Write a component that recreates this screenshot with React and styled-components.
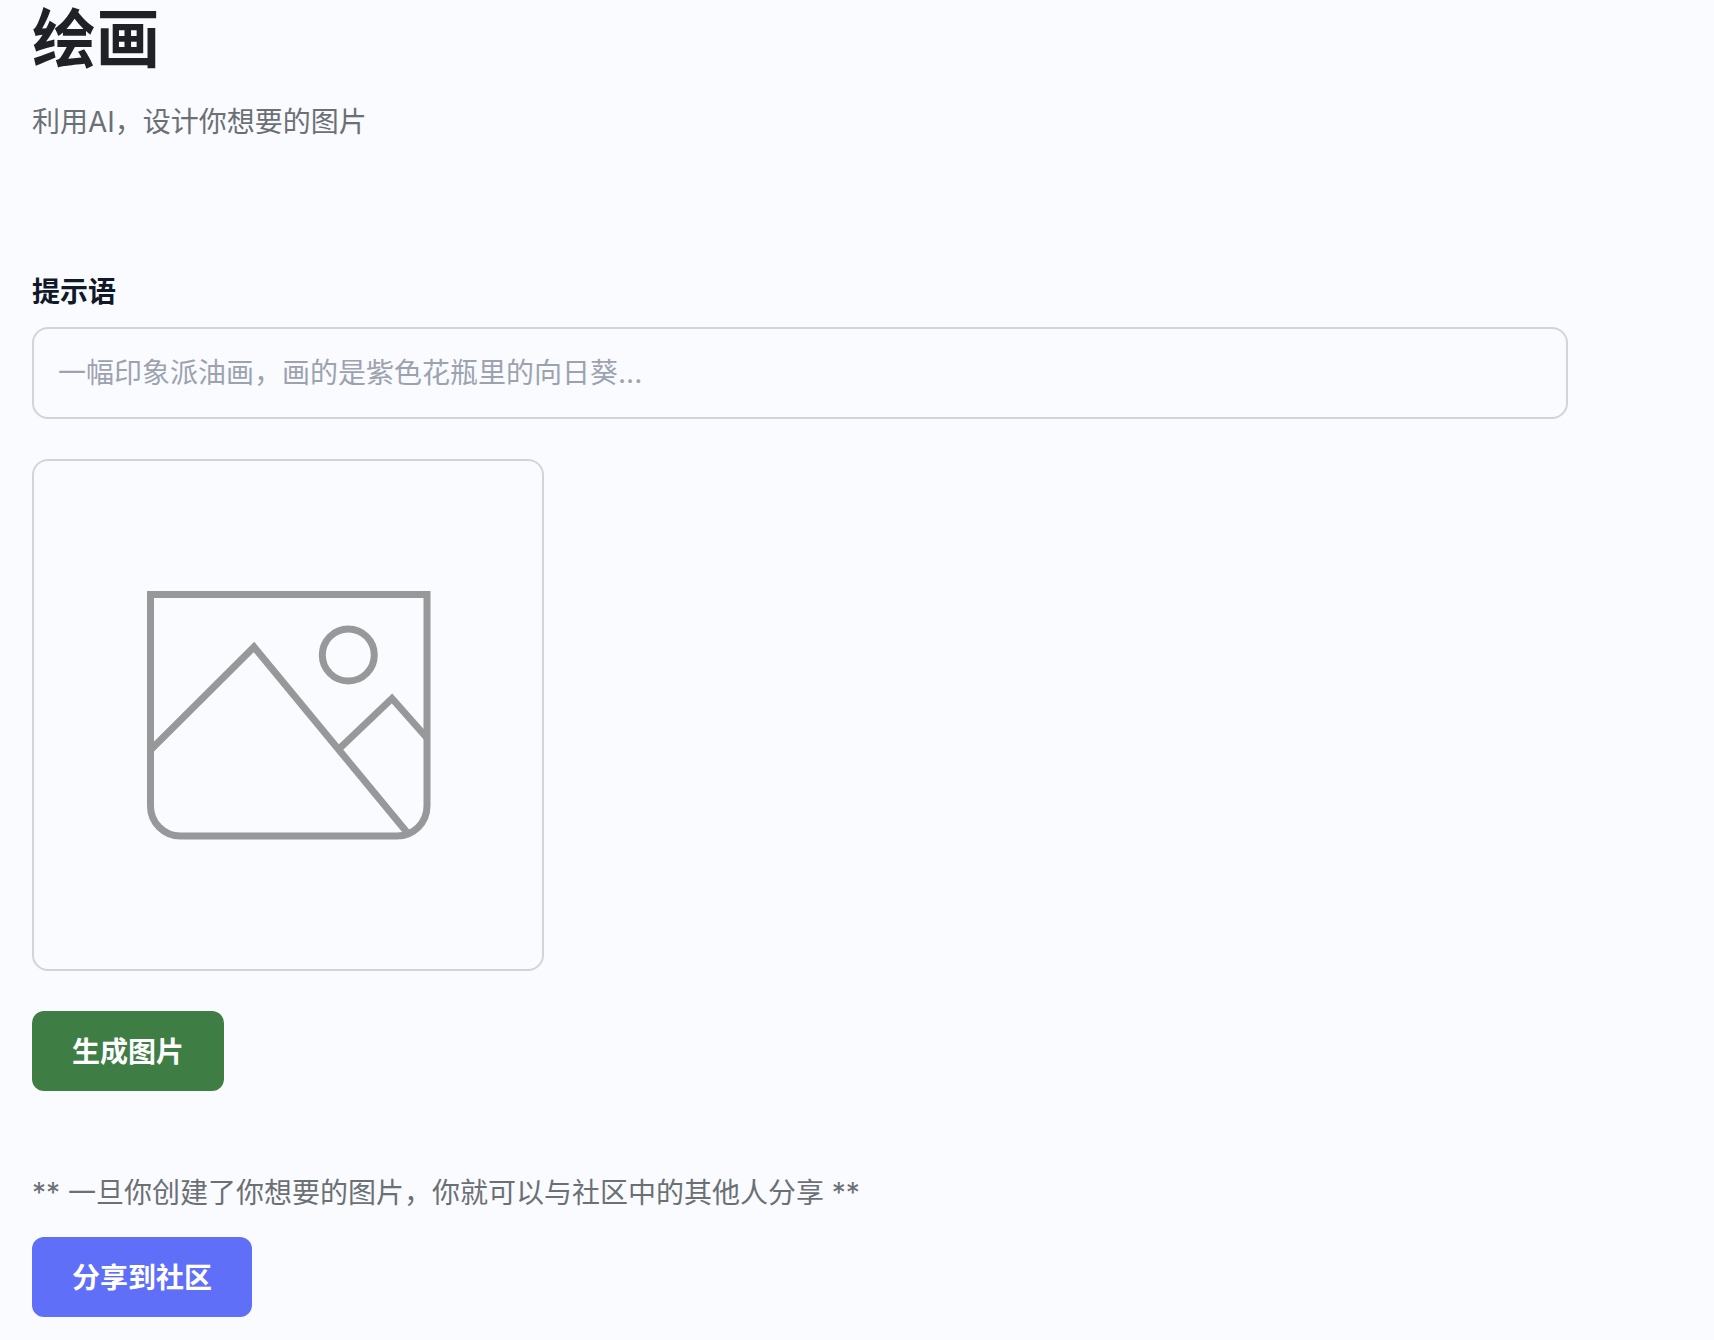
import React from "react";
import styled, { createGlobalStyle } from "styled-components";

const GlobalStyle = createGlobalStyle`
  html, body {
    margin: 0;
    padding: 0;
    background: #fafbff;
  }
  body {
    font-family: Inter, "Noto Sans CJK SC", sans-serif;
    overflow: hidden;
  }
`;

const Page = styled.main`
  display: flex;
  flex-direction: column;
  align-items: flex-start;
  height: 1340px;
  box-sizing: border-box;
  padding: 3px 32px 0;
`;

const Title = styled.h1`
  margin: 0;
  font-size: 64px;
  line-height: 72px;
  font-weight: 700;
  color: #1f2126;
`;

const Subtitle = styled.p`
  margin: 25px 0 0;
  font-size: 28px;
  line-height: 44px;
  color: #6b7075;
`;

const Label = styled.label`
  margin-top: 128px;
  font-size: 28px;
  line-height: 40px;
  font-weight: 600;
  color: #111827;
`;

const PromptInput = styled.input`
  box-sizing: border-box;
  width: 1536px;
  height: 92px;
  margin-top: 15px;
  padding: 0 24px;
  border: 2px solid #d1d5db;
  border-radius: 16px;
  background: transparent;
  font: inherit;
  font-size: 28px;
  color: #111827;
  outline: none;

  &::placeholder {
    color: #9ca3af;
    opacity: 1;
  }
`;

const Preview = styled.div`
  box-sizing: border-box;
  display: flex;
  align-items: center;
  justify-content: center;
  width: 512px;
  height: 512px;
  margin-top: 40px;
  border: 2px solid #d1d5db;
  border-radius: 16px;
`;

const Button = styled.button`
  height: 80px;
  margin-top: ${(p) => p.$top}px;
  padding: 0 40px 2px;
  border: 0;
  border-radius: 12px;
  background: ${(p) => p.$bg};
  color: #fff;
  font: inherit;
  font-size: 28px;
  font-weight: 600;
`;

const Note = styled.p`
  margin: 80px 0 0;
  font-size: 28px;
  line-height: 44px;
  color: #6b7075;
`;

function ImagePlaceholder() {
  return (
    <svg width="300" height="260" viewBox="0 0 300 260" fill="none" stroke="#979899" strokeWidth="7">
      <path d="M12.5 9.5H289V221a30 30 0 0 1-30 30H42.5a30 30 0 0 1-30-30Z" />
      <path d="M12.5 165 116 62 268.7 247" />
      <path d="M202 163 254 113.5 289 153" />
      <circle cx="210.3" cy="70" r="26" />
    </svg>
  );
}

export default function App() {
  return (
    <>
      <GlobalStyle />
      <Page>
        <Title>绘画</Title>
        <Subtitle>利用AI&#xFF0C;设计你想要的图片</Subtitle>
        <Label htmlFor="prompt">提示语</Label>
        <PromptInput id="prompt" placeholder="一幅印象派油画&#xFF0C;画的是紫色花瓶里的向日葵..." />
        <Preview>
          <ImagePlaceholder />
        </Preview>
        <Button $top={40} $bg="#3e7e45">生成图片</Button>
        <Note>** 一旦你创建了你想要的图片&#xFF0C;你就可以与社区中的其他人分享 **</Note>
        <Button $top={22} $bg="#606ff8">分享到社区</Button>
      </Page>
    </>
  );
}
